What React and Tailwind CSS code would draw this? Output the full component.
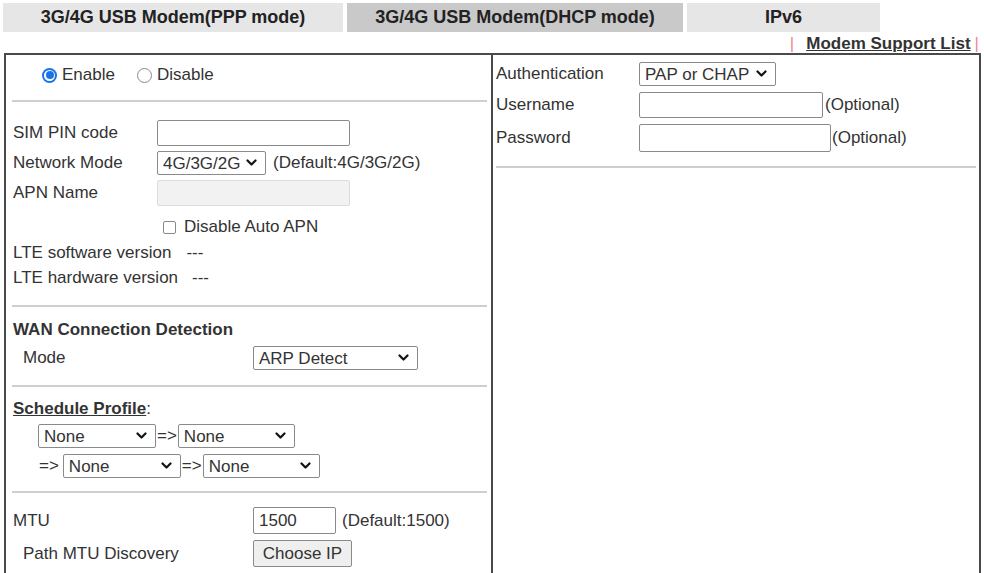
import React from 'react';

const FONT = { fontFamily: '"Liberation Sans", Arial, sans-serif' };

const Chevron = () => (
  <svg width="11" height="8" viewBox="0 0 11 8" className="shrink-0">
    <path d="M1.5 1.5 L5.5 5.5 L9.5 1.5" fill="none" stroke="#111" strokeWidth="2.2" strokeLinecap="round" strokeLinejoin="round" />
  </svg>
);

// fake native select, fixed width so the page lines up with the screenshot
const Select = ({ value, w, h = 'h-[24px]', className = '' }) => (
  <div className={`${w} ${h} ${className} flex items-center justify-between border border-[#8a8a8a] rounded-[2px] bg-white pl-[5px] pr-[8px] text-[#333] shrink-0`}>
    <span className="leading-none">{value}</span>
    <Chevron />
  </div>
);

const Input = ({ w, value = '', disabled = false, h = 'h-[26px]' }) => (
  <div
    className={`${w} ${h} flex items-center rounded-[2px] px-[5px] shrink-0 ${
      disabled ? 'bg-[#f2f2f2] border border-[#dcdcdc]' : 'bg-white border border-[#8a8a8a]'
    }`}
  >
    {value}
  </div>
);

const Hr = ({ className = '' }) => <div className={`h-[2px] bg-[#cfcfcf] ${className}`} />;

const Radio = ({ checked, className = '' }) =>
  checked ? (
    <span className={`w-[15px] h-[15px] rounded-full bg-[#1a73e8] flex items-center justify-center shrink-0 ${className}`}>
      <span className="w-[11px] h-[11px] rounded-full bg-white flex items-center justify-center">
        <span className="w-[8px] h-[8px] rounded-full bg-[#1a73e8]" />
      </span>
    </span>
  ) : (
    <span className={`block w-[15px] h-[15px] rounded-full border border-[#8a8a8a] bg-white shrink-0 ${className}`} />
  );

const Arrow = () => <span className="px-[1px] text-[#333]">=&gt;</span>;

export default function App() {
  return (
    <div className="w-[984px] h-[573px] overflow-hidden bg-white text-[17px] text-[#333]" style={FONT}>
      {/* tabs */}
      <div className="flex gap-[4px] pl-[3px] pt-[3px]">
        <div className="w-[340px] h-[29px] bg-[#e6e6e6] flex items-center justify-center font-bold text-[18px] text-[#222]">
          3G/4G USB Modem(PPP mode)
        </div>
        <div className="w-[336px] h-[29px] bg-[#c9c9c9] flex items-center justify-center font-bold text-[18px] text-[#222]">
          3G/4G USB Modem(DHCP mode)
        </div>
        <div className="w-[193px] h-[29px] bg-[#e6e6e6] flex items-center justify-center font-bold text-[18px] text-[#222]">
          IPv6
        </div>
      </div>

      <div className="h-[21px] flex items-center justify-end pr-[5px] pt-[2px]">
        <span className="text-[#e88] font-normal mr-[12px]">|</span>
        <span className="font-bold underline text-[#333]">Modem Support List</span>
        <span className="text-[#e88] ml-[4px]">|</span>
      </div>

      {/* main panel */}
      <div className="ml-[4px] w-[977px] h-[560px] border-2 border-[#4a4a4a] flex">
        {/* left column */}
        <div className="w-[487px] border-r-2 border-[#4a4a4a] shrink-0">
          <div className="h-[39px] flex items-center pl-[36px] pt-[1px]">
            <Radio checked />
            <span className="ml-[5px]">Enable</span>
            <Radio className="ml-[22px]" />
            <span className="ml-[5px]">Disable</span>
          </div>
          <Hr className="mt-[6px] ml-[6px] mr-[4px]" />

          <div className="pl-[7px] pt-[16px]">
            <div className="h-[30px] flex items-center">
              <span className="w-[144px]">SIM PIN code</span>
              <Input w="w-[193px]" />
            </div>
            <div className="h-[30px] flex items-center">
              <span className="w-[144px]">Network Mode</span>
              <Select value="4G/3G/2G" w="w-[109px]" />
              <span className="ml-[7px]">(Default:4G/3G/2G)</span>
            </div>
            <div className="h-[30px] flex items-center">
              <span className="w-[144px]">APN Name</span>
              <Input w="w-[193px]" disabled />
            </div>
            <div className="h-[32px] flex items-center pl-[150px] pt-[6px]">
              <span className="w-[13px] h-[13px] border border-[#8a8a8a] rounded-[2px] bg-white" />
              <span className="ml-[8px]">Disable Auto APN</span>
            </div>
            <div className="h-[25px] flex items-center">
              LTE software version<span className="ml-[15px]">---</span>
            </div>
            <div className="h-[25px] flex items-center">
              LTE hardware version<span className="ml-[14px]">---</span>
            </div>
          </div>

          <Hr className="mt-[15px] ml-[6px] mr-[4px]" />

          <div className="pl-[7px]">
            <div className="mt-[11px] h-[24px] flex items-center font-bold">WAN Connection Detection</div>
            <div className="mt-[4px] h-[24px] flex items-center">
              <span className="w-[240px] pl-[10px]">Mode</span>
              <Select value="ARP Detect" w="w-[165px]" />
            </div>
          </div>

          <Hr className="mt-[15px] ml-[6px] mr-[4px]" />

          <div className="pl-[7px]">
            <div className="mt-[10px] h-[24px] flex items-center">
              <span className="font-bold underline">Schedule Profile</span>
              <span>:</span>
            </div>
            <div className="mt-[3px] h-[24px] flex items-center pl-[25px]">
              <Select value="None" w="w-[118px]" />
              <Arrow />
              <Select value="None" w="w-[117px]" />
            </div>
            <div className="mt-[6px] h-[24px] flex items-center pl-[25px]">
              <Arrow />
              <Select value="None" w="w-[118px]" className="ml-[3px]" />
              <Arrow />
              <Select value="None" w="w-[117px]" />
            </div>
          </div>

          <Hr className="mt-[13px] ml-[6px] mr-[4px]" />

          <div className="pl-[7px]">
            <div className="mt-[14px] h-[27px] flex items-center">
              <span className="w-[240px]">MTU</span>
              <Input w="w-[83px]" value="1500" h="h-[27px]" />
              <span className="ml-[6px]">(Default:1500)</span>
            </div>
            <div className="mt-[6px] h-[27px] flex items-center">
              <span className="w-[240px] pl-[10px]">Path MTU Discovery</span>
              <div className="w-[99px] h-[27px] flex items-center justify-center bg-[#efefef] border border-[#8a8a8a] rounded-[2px]">
                Choose IP
              </div>
            </div>
          </div>
        </div>

        {/* right column */}
        <div className="flex-1">
          <div className="pl-[3px] pt-[6px]">
            <div className="h-[26px] flex items-center">
              <span className="w-[143px]">Authentication</span>
              <Select value="PAP or CHAP" w="w-[137px]" />
            </div>
            <div className="mt-[3px] h-[29px] flex items-center">
              <span className="w-[143px]">Username</span>
              <Input w="w-[184px]" />
              <span className="ml-[2px]">(Optional)</span>
            </div>
            <div className="mt-[4px] h-[29px] flex items-center">
              <span className="w-[143px]">Password</span>
              <Input w="w-[192px]" h="h-[28px]" />
              <span className="ml-[1px]">(Optional)</span>
            </div>
          </div>
          <Hr className="mt-[14px] ml-[3px] mr-[3px]" />
        </div>
      </div>
    </div>
  );
}
